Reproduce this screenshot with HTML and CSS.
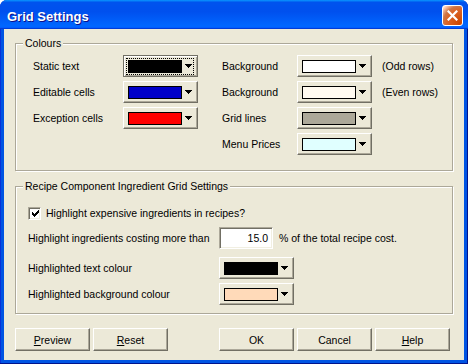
FILE: index.html
```html
<!DOCTYPE html>
<html>
  <head>
    <title>Grid Settings</title>
    <link rel="stylesheet" href="styles.css">
  </head>

<body>
  <div class="window">
    <div class="titlebar">
      <span class="title">Grid Settings</span>
      <button class="close-button">
        <svg width="11" height="11" viewBox="0 0 11 11"><path d="M1.5 1.5l8 8M9.5 1.5l-8 8" stroke="#fff" stroke-width="2.2" stroke-linecap="square"/></svg>
      </button>
    </div>

    <div class="client">
      <fieldset class="group">
        <legend>Colours</legend>
        <div class="colour-grid">
          <span class="label">Static text</span>
          <button class="colour-button focused"><span class="focus-ring"><span class="swatch" style="background: #000000;"></span><svg class="arrow" width="7" height="4"><path d="M0 0h7v1H0zM1 1h5v1H1zM2 2h3v1H2zM3 3h1v1H3z"/></svg></span></button>
          <span></span>
          <span class="label">Background</span>
          <button class="colour-button"><span class="swatch" style="background: #ffffff;"></span><svg class="arrow" width="7" height="4"><path d="M0 0h7v1H0zM1 1h5v1H1zM2 2h3v1H2zM3 3h1v1H3z"/></svg></button>
          <span class="suffix">(Odd rows)</span>

          <span class="label">Editable cells</span>
          <button class="colour-button"><span class="swatch" style="background: #0000c8;"></span><svg class="arrow" width="7" height="4"><path d="M0 0h7v1H0zM1 1h5v1H1zM2 2h3v1H2zM3 3h1v1H3z"/></svg></button>
          <span></span>
          <span class="label">Background</span>
          <button class="colour-button"><span class="swatch" style="background: #fffaf0;"></span><svg class="arrow" width="7" height="4"><path d="M0 0h7v1H0zM1 1h5v1H1zM2 2h3v1H2zM3 3h1v1H3z"/></svg></button>
          <span class="suffix">(Even rows)</span>

          <span class="label">Exception cells</span>
          <button class="colour-button"><span class="swatch" style="background: #ff0000;"></span><svg class="arrow" width="7" height="4"><path d="M0 0h7v1H0zM1 1h5v1H1zM2 2h3v1H2zM3 3h1v1H3z"/></svg></button>
          <span></span>
          <span class="label">Grid lines</span>
          <button class="colour-button"><span class="swatch" style="background: #aca899;"></span><svg class="arrow" width="7" height="4"><path d="M0 0h7v1H0zM1 1h5v1H1zM2 2h3v1H2zM3 3h1v1H3z"/></svg></button>
          <span></span>

          <span></span>
          <span></span>
          <span></span>
          <span class="label">Menu Prices</span>
          <button class="colour-button"><span class="swatch" style="background: #e0ffff;"></span><svg class="arrow" width="7" height="4"><path d="M0 0h7v1H0zM1 1h5v1H1zM2 2h3v1H2zM3 3h1v1H3z"/></svg></button>
          <span></span>
        </div>
      </fieldset>

      <fieldset class="group recipe-group">
        <legend>Recipe Component Ingredient Grid Settings</legend>
        <div class="recipe-body">
          <label class="check-row">
            <span class="checkbox">
              <svg width="7" height="7"><path d="M6 0h1v1H6zM5 1h2v1H5zM0 2h1v1H0zM4 2h3v1H4zM0 3h2v1H0zM3 3h3v1H3zM0 4h5v1H0zM1 5h3v1H1zM2 6h1v1H2z"/></svg>
            </span>
            Highlight expensive ingredients in recipes?
          </label>

          <div class="field-row percent-row">
            <span class="field-label">Highlight ingredients costing more than</span>
            <span class="number-box">15.0</span>
            <span class="after-box">% of the total recipe cost.</span>
          </div>

          <div class="field-row text-colour-row">
            <span class="field-label">Highlighted text colour</span>
            <button class="colour-button"><span class="swatch" style="background: #000000;"></span><svg class="arrow" width="7" height="4"><path d="M0 0h7v1H0zM1 1h5v1H1zM2 2h3v1H2zM3 3h1v1H3z"/></svg></button>
          </div>

          <div class="field-row bg-colour-row">
            <span class="field-label">Highlighted background colour</span>
            <button class="colour-button"><span class="swatch" style="background: #ffdab9;"></span><svg class="arrow" width="7" height="4"><path d="M0 0h7v1H0zM1 1h5v1H1zM2 2h3v1H2zM3 3h1v1H3z"/></svg></button>
          </div>
        </div>
      </fieldset>

      <div class="button-row">
        <button class="push-button"><u>P</u>review</button>
        <button class="push-button"><u>R</u>eset</button>
        <button class="push-button ok-button">OK</button>
        <button class="push-button">Cancel</button>
        <button class="push-button"><u>H</u>elp</button>
      </div>
    </div>
  </div>
</body>
</html>
```

FILE: styles.css
```css
body {
  margin: 0;
  background-color: #ffffff;
  font-family: "Liberation Sans", Arial, sans-serif;
  font-size: 10.5px;
  color: #000000;
}

button {
  font-family: "Liberation Sans", Arial, sans-serif;
  font-size: 10.5px;
  color: #000000;
  padding: 0;
  margin: 0;
}

.window {
  width: 468px;
  height: 364px;
  display: flex;
  flex-direction: column;
  background-color: #0054e3;
  border-radius: 7px 7px 0 0;
  box-shadow: inset -1px -1px #00138c, inset 1px 0 #0831d9;
  overflow: hidden;
}

.titlebar {
  height: 29px;
  flex: none;
  display: flex;
  align-items: center;
  justify-content: space-between;
  padding: 0 5px 0 7px;
  background: linear-gradient(180deg, #0997ff, #0053ee 8%, #0050ee 40%, #0066ff 88%, #0066ff 93%, #005bff 95%, #003dd7 96%, #003dd7);
}

.title {
  color: #ffffff;
  font-weight: bold;
  font-size: 13px;
  padding-top: 3px;
  text-shadow: 1px 1px #0f1089;
}

.close-button {
  width: 21px;
  height: 21px;
  margin-top: 1px;
  border: 1px solid #ffffff;
  border-radius: 3px;
  background: radial-gradient(circle at 90% 90%, #cc4600 0%, #dc6527 55%, #cd7546 70%, #ffccb2 90%, #ffffff 100%);
  display: flex;
  align-items: center;
  justify-content: center;
}

.client {
  flex: 1;
  margin: 0 4px 4px 4px;
  padding: 0 11px;
  background-color: #ece9d8;
  display: flex;
  flex-direction: column;
}

.group {
  margin: 8px 0 0 0;
  padding: 0;
  min-width: 0;
  border: 1px solid #aca899;
  box-shadow: inset 1px 1px #ffffff, 1px 1px #ffffff;
}

.group legend {
  margin-left: 7px;
  padding: 0 2px;
  line-height: 13px;
  background-color: #ece9d8;
}

.colour-grid {
  display: grid;
  grid-template-columns: 90px 75px 24px 75px 75px auto;
  grid-auto-rows: 22px;
  row-gap: 4px;
  align-items: center;
  padding: 5px 0 15px 17px;
}

.suffix {
  padding-left: 10px;
}

.colour-button {
  width: 75px;
  height: 22px;
  box-sizing: border-box;
  border: 1px solid;
  border-color: #ffffff #716f64 #716f64 #ffffff;
  box-shadow: inset -1px -1px #aca899;
  background-color: #ece9d8;
  display: flex;
  align-items: center;
  padding-left: 4px;
}

.colour-button.focused {
  border-color: #716f64;
  box-shadow: inset 1px 1px #ffffff, inset -1px -1px #aca899;
}

.focus-ring {
  display: flex;
  align-items: center;
  outline: 1px dotted #000000;
  outline-offset: 1px;
}

.swatch {
  width: 54px;
  height: 13px;
  box-sizing: border-box;
  border: 1px solid #000000;
}

.arrow {
  margin-left: 3px;
  fill: #000000;
}

.recipe-group {
  margin-top: 9px;
}

.recipe-body {
  padding: 9px 0 8px 12px;
  display: flex;
  flex-direction: column;
}

.check-row {
  height: 22px;
  display: flex;
  align-items: center;
  gap: 5px;
}

.checkbox {
  width: 13px;
  height: 13px;
  box-sizing: border-box;
  border: 1px solid;
  border-color: #aca899 #ffffff #ffffff #aca899;
  box-shadow: inset 1px 1px #716f64, inset -1px -1px #f1efe2;
  background-color: #ffffff;
  display: flex;
  align-items: center;
  justify-content: center;
  padding: 1px 0 0 1px;
}

.field-row {
  height: 22px;
  display: flex;
  align-items: center;
}

.field-label {
  width: 191px;
}

.percent-row {
  margin-top: 3px;
}

.text-colour-row {
  margin-top: 8px;
}

.bg-colour-row {
  margin-top: 4px;
}

.number-box {
  width: 54px;
  height: 22px;
  box-sizing: border-box;
  border: 1px solid;
  border-color: #aca899 #ffffff #ffffff #aca899;
  box-shadow: inset 1px 1px #716f64, inset -1px -1px #f1efe2;
  background-color: #ffffff;
  text-align: right;
  padding: 3px 4px 0 0;
  line-height: 14px;
}

.after-box {
  margin-left: 6px;
}

.button-row {
  display: flex;
  gap: 3px;
  margin-top: 14px;
}

.push-button {
  width: 75px;
  height: 23px;
  box-sizing: border-box;
  border: 1px solid;
  border-color: #ffffff #716f64 #716f64 #ffffff;
  box-shadow: inset -1px -1px #aca899;
  background-color: #ece9d8;
}

.ok-button {
  margin-left: 48px;
}
```
